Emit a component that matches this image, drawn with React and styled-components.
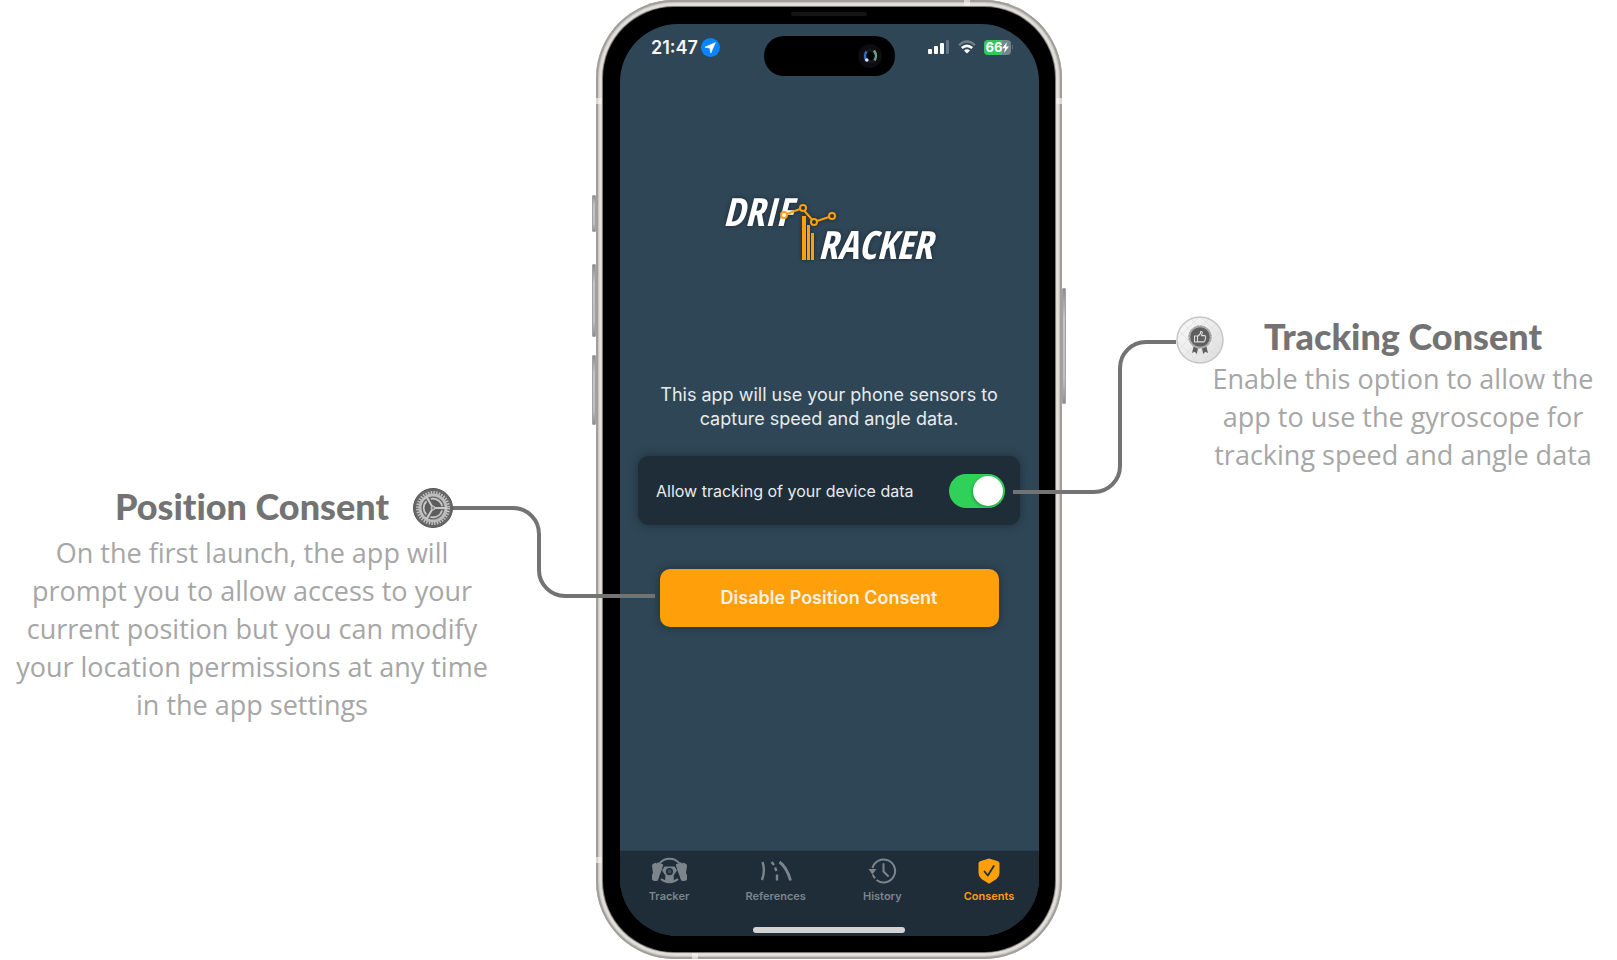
import React, { useState } from "react";
import styled, { createGlobalStyle } from "styled-components";

const GlobalStyle = createGlobalStyle`
  *, *::before, *::after { box-sizing: border-box; }
  body { margin: 0; background: #ffffff; }
  h2, p { margin: 0; font-weight: inherit; }
`;

const appFont = `Inter, Roboto, sans-serif`;
const amber = "#ff9f0a";

const Page = styled.main`
  display: grid;
  grid-template-columns: minmax(0, 596fr) 466px minmax(0, 555fr);
  align-items: start;
`;

/* ---------- callouts ---------- */

const Callout = styled.section`
  position: relative;
  z-index: 2;
  justify-self: ${(p) => (p.$side === "left" ? "end" : "start")};
  width: ${(p) => (p.$side === "left" ? "480px" : "390px")};
  margin: ${(p) => (p.$side === "left" ? "484px 104px 0 0" : "314px 0 0 146px")};
  text-align: center;
`;

const CalloutHeader = styled.div`
  display: grid;
  grid-template-columns: 1fr auto 1fr;
  align-items: start;
  height: ${(p) => (p.$side === "left" ? "50px" : "46px")};
`;

const CalloutTitle = styled.h2`
  grid-column: 2;
  grid-row: 1;
  font: 900 36px/44px Lato, sans-serif;
  font-variant-ligatures: none;
  color: #737373;
  white-space: nowrap;
`;

const CalloutText = styled.p`
  font: 400 27px/38px "Open Sans", "Noto Sans", sans-serif;
  color: #a6a6a6;
`;

const Marker = styled.div`
  position: relative;
  grid-row: 1;
  grid-column: ${(p) => (p.$side === "left" ? 3 : 1)};
  justify-self: start;
  width: ${(p) => (p.$side === "left" ? "40px" : "48px")};
  height: ${(p) => (p.$side === "left" ? "40px" : "48px")};
  margin: ${(p) => (p.$side === "left" ? "4px 0 0 24px" : "2px 0 0 -32px")};
  > svg { display: block; }
`;

const Connector = styled.svg`
  position: absolute;
  top: ${(p) => (p.$side === "left" ? "18px" : "24px")};
  ${(p) => (p.$side === "left" ? "left: 100%;" : "right: 100%;")}
  fill: none;
  stroke: #737373;
  stroke-width: 4;
`;

/* ---------- phone ---------- */

const Phone = styled.div`
  position: relative;
  display: flex;
  min-height: 959px;
  padding: 7px;
  border-radius: 78px;
  background: #e6e5e0;
  box-shadow: inset 0 0 0 2px #a09f9c, inset 0 0 2px 3px #bdbcb8;
`;

const SideButton = styled.span`
  position: absolute;
  ${(p) => (p.$side === "left" ? "right: 100%;" : "left: 100%;")}
  top: ${(p) => p.$top}px;
  width: 4px;
  height: ${(p) => p.$length}px;
  border-radius: 1px;
  border: 1px solid #a3a3a5;
  background: linear-gradient(#8d8d8d, #c4c4c4 25%, #bfbfbf 80%, #8d8d8d);
`;

const AntennaBand = styled.span`
  position: absolute;
  background: rgba(250, 250, 248, 0.6);
  ${(p) => (p.$edge === "left" || p.$edge === "right" ? "width: 7px; height: 6px;" : "width: 6px; height: 7px;")}
  ${(p) => `${p.$edge}: 0;`}
  ${(p) => (p.$edge === "left" || p.$edge === "right" ? `top: ${p.$at}px;` : `left: ${p.$at}px;`)}
`;

const Bezel = styled.div`
  position: relative;
  flex: 1;
  display: flex;
  padding: 17px 16px 16px 17px;
  border-radius: 71px;
  background: #000;
  box-shadow: 0 0 1px 1px #6f6e6c;
`;

const Speaker = styled.span`
  position: absolute;
  top: 5px;
  left: 50%;
  width: 76px;
  height: 4px;
  margin-left: -38px;
  border-radius: 2px;
  background: #141414;
`;

const Screen = styled.div`
  flex: 1;
  display: flex;
  flex-direction: column;
  overflow: hidden;
  border-radius: 58px;
  background: #2f4656;
  color: #e8ebed;
  font-family: ${appFont};
`;

const StatusBar = styled.div`
  display: grid;
  grid-template-columns: 1fr 131px 1fr;
  padding-top: 12px;
`;

const StatusLeft = styled.div`
  display: flex;
  align-items: center;
  gap: 3px;
  height: 22px;
  padding-left: 31px;
  font-size: 18px;
  font-weight: 600;
  color: #f4f6f7;
`;

const StatusRight = styled.div`
  display: flex;
  align-items: center;
  justify-content: flex-end;
  gap: 8px;
  height: 22px;
  padding-right: 26px;
`;

const Island = styled.div`
  display: flex;
  align-items: center;
  justify-content: flex-end;
  height: 40px;
  padding-right: 12px;
  border-radius: 20px;
  background: #000;
`;

const Battery = styled.div`
  display: flex;
  align-items: center;
  justify-content: center;
  width: 27px;
  height: 15px;
  border-radius: 4px;
  background: linear-gradient(90deg, #34c759 68%, #76848e 68%);
  color: #fff;
  font-size: 13px;
  font-weight: 700;
  line-height: 15px;
`;

const BatteryGroup = styled.div`
  display: flex;
  align-items: center;
  gap: 1px;
`;

const BatteryTip = styled.span`
  width: 1px;
  height: 4px;
  background: #5f717d;
`;

const Content = styled.div`
  flex: 1;
  display: flex;
  flex-direction: column;
  align-items: center;
  padding: 112px 19px 24px 18px;
`;

const Logo = styled.svg`
  display: block;
  width: 220px;
  height: 74px;
  overflow: visible;
  filter: drop-shadow(0 0 2px rgba(15, 25, 33, 0.7));
`;

const LogoText = styled.text`
  font: italic 700 39px "Open Sans Condensed", "Roboto Condensed", "Open Sans", sans-serif;
  fill: #ffffff;
`;

const Intro = styled.p`
  max-width: 360px;
  margin-top: 121px;
  font-size: 18px;
  line-height: 24px;
  text-align: center;
`;

const ConsentRow = styled.label`
  align-self: stretch;
  display: flex;
  align-items: center;
  justify-content: space-between;
  height: 69px;
  margin-top: 25px;
  padding: 0 15px 0 18px;
  border-radius: 11px;
  background: #1f2d38;
  box-shadow: 0 0 8px rgba(20, 32, 41, 0.6);
  font-size: 16px;
`;

const Switch = styled.input`
  appearance: none;
  position: relative;
  width: 56px;
  height: 34px;
  margin: 0;
  border-radius: 17px;
  background: #55636d;
  cursor: pointer;

  &::after {
    content: "";
    position: absolute;
    top: 2px;
    left: 2px;
    width: 30px;
    height: 30px;
    border-radius: 50%;
    background: #fff;
    box-shadow: -1px 1px 3px rgba(0, 0, 0, 0.25);
  }
  &:checked { background: #30d158; }
  &:checked::after { left: 24px; }
`;

const PrimaryButton = styled.button`
  width: 339px;
  height: 58px;
  margin-top: 44px;
  border: 0;
  border-radius: 10px;
  background: ${amber};
  box-shadow: 0 0 8px rgba(20, 32, 41, 0.6);
  color: #f6f1e8;
  font: 600 18px/24px ${appFont};
  cursor: pointer;
`;

const TabBar = styled.nav`
  display: flex;
  justify-content: space-between;
  height: 85px;
  padding: 6px 16px 0 15px;
  background: #1f2d38;
  box-shadow: 0 -1px 0 #2a3e4b;
`;

const TabButton = styled.button`
  display: flex;
  flex-direction: column;
  align-items: center;
  gap: 3px;
  width: 68px;
  height: 44px;
  padding: 0;
  border: 0;
  background: none;
  color: ${(p) => (p.$active ? amber : "#7c858c")};
  font: 600 11px/16px ${appFont};
  cursor: pointer;
  svg { display: block; flex: none; }
`;

const HomeIndicator = styled.span`
  position: absolute;
  bottom: 19px;
  left: 50%;
  width: 152px;
  height: 6px;
  margin-left: -76px;
  border-radius: 3px;
  background: #d3d3d3;
`;

/* ---------- icons ---------- */

const LocationIcon = () => (
  <svg width="19" height="19" viewBox="0 0 19 19" aria-hidden="true">
    <circle cx="9.5" cy="9.5" r="9.5" fill="#0a84ff" />
    <path d="M14.4 4.6 3.9 9.2 8.9 10.1 9.8 15.1Z" fill="#fff" stroke="#fff" strokeWidth="0.6" strokeLinejoin="round" />
  </svg>
);

const CameraIcon = () => (
  <svg width="26" height="26" viewBox="0 0 26 26" aria-hidden="true">
    <circle cx="13" cy="13" r="12" fill="#0d0d0f" />
    <circle cx="13" cy="13" r="7.5" fill="#14181d" />
    <path d="M9.500 8.500Q7 12.500 9 17" stroke="#2f6fc4" strokeWidth="2.400" fill="none" />
    <path d="M17 7.500Q20.500 12.500 17.500 17.500" stroke="#6d9c85" strokeWidth="2.600" fill="none" />
    <circle cx="13.500" cy="13" r="4" fill="#030405" />
    <circle cx="9.800" cy="17" r="1.800" fill="#dfe2fa" />
  </svg>
);

const SignalIcon = () => (
  <svg width="22" height="14" viewBox="0 0 22 14" fill="#fff" aria-hidden="true">
    <rect x="0" y="9" width="4" height="5" rx="1" />
    <rect x="6" y="6" width="4" height="8" rx="1" />
    <rect x="12" y="3" width="4" height="11" rx="1" />
    <rect x="18" y="0" width="3" height="14" rx="1" opacity="0.25" />
  </svg>
);

const WifiIcon = () => (
  <svg width="18" height="14" viewBox="0 0 18 14" fill="none" stroke="#fff" aria-hidden="true">
    <path d="M1 5.200Q9-2.200 17 5.200" strokeWidth="2.200" opacity="0.3" />
    <path d="M3.800 8Q9 3.600 14.200 8" strokeWidth="2.600" />
    <path d="M9 13.400 6 10.500Q9 8 12 10.500Z" fill="#fff" stroke="none" />
  </svg>
);

const BoltIcon = () => (
  <svg width="7" height="11" viewBox="0 0 7 11" fill="#fff" aria-hidden="true">
    <path d="M5 0 0 6.200H3L2 11 7 4.600H4Z" />
  </svg>
);

const GearIcon = () => (
  <svg width="40" height="40" viewBox="-20 -20 40 40" fill="none" aria-hidden="true">
    <circle r="19.500" fill="#666" stroke="#585858" />
    <circle r="15.500" stroke="#c4c4c4" strokeWidth="3" strokeDasharray="1.400 1.305" />
    <circle r="13" stroke="#bdbdbd" strokeWidth="3" />
    <circle r="9.500" fill="#5d5d5d" stroke="#777" strokeWidth="1.500" />
    <circle r="9.300" stroke="#c9c9c9" strokeWidth="1.700" strokeDasharray="14.500 5" strokeDashoffset="-2.500" />
    <g stroke="#c9c9c9" strokeWidth="2">
      <path d="M0 0H14M0 0-6.500-11.300M0 0-6.500 11.300" />
    </g>
    <circle r="2" fill="#8a8a8a" stroke="#c9c9c9" />
  </svg>
);

const MedalIcon = () => (
  <svg width="48" height="48" viewBox="0 0 48 48" aria-hidden="true">
    <defs>
      <linearGradient id="medalFace" x1="0" y1="0" x2="1" y2="1">
        <stop offset="0" stopColor="#fbfbfb" />
        <stop offset="1" stopColor="#dcdcdc" />
      </linearGradient>
      <pattern id="medalMesh" width="12" height="12" patternUnits="userSpaceOnUse">
        <path d="M0 0 12 12M12 0 0 12" stroke="#dedede" strokeWidth="0.7" />
      </pattern>
    </defs>
    <circle cx="24" cy="24" r="23" fill="url(#medalFace)" />
    <circle cx="24" cy="24" r="23" fill="url(#medalMesh)" stroke="#c6c6c6" strokeWidth="1.500" />
    <path d="M18 29 16 37 18.800 35.800 20.800 38 22.300 31ZM30 29 32 37 29.200 35.800 27.200 38 25.700 31Z" fill="#5e5e5e" />
    <circle cx="24" cy="21" r="11.500" fill="#b0b0b0" />
    <circle cx="24" cy="21" r="11" fill="none" stroke="#999" strokeWidth="1" strokeDasharray="2 1.456" />
    <circle cx="24" cy="21" r="9.800" fill="#5f5f5f" />
    <path d="M18.500 20H21.500V26H18.500ZM21.500 20.500 24.500 17.500V15.800Q25.800 15 26.300 16.600L25.500 19.600H29Q30.200 20.600 29.300 21.800 30 23 29 23.700 29.200 25 28 25.900H21.500" fill="none" stroke="#dedede" strokeWidth="1.100" strokeLinejoin="round" />
  </svg>
);

const WheelIcon = () => (
  <svg width="37" height="28" viewBox="0 0 37 28" fill="currentColor" aria-hidden="true">
    <path d="M8.500 6.500A12.500 12 0 0 1 28.500 6.500M10 22A12.500 12 0 0 0 27 22" fill="none" stroke="currentColor" strokeWidth="2" />
    <path d="M3 6.500Q4.200 5 5.500 6.500L7 5.500Q8.500 5 9 6.500L11.500 7Q12.800 7.500 11.800 9.500L9.800 15.500Q8.500 18 7.800 21L6.800 23.500Q3 25 1 22.500L1 18Q2.600 16 1.600 13L1 9Q1 6.500 3 6.500Z" />
    <path d="M34 6.500Q32.800 5 31.500 6.500L30 5.500Q28.500 5 28 6.500L25.500 7Q24.200 7.500 25.200 9.500L27.200 15.500Q28.500 18 29.200 21L30.200 23.500Q34 25 36 22.500L36 18Q34.400 16 35.400 13L36 9Q36 6.500 34 6.500Z" />
    <path fillRule="evenodd" d="M13.500 9.500H23.500L26 13.500 22.600 18.500 22.900 23.500Q18.500 25.500 14.100 23.500L14.400 18.500 11 13.500ZM18.500 11A3.600 3.600 0 1 0 18.500 18.200 3.600 3.600 0 1 0 18.500 11Z" />
    <circle cx="18.500" cy="14.600" r="2" opacity="0.35" />
  </svg>
);

const RoadIcon = () => (
  <svg width="34" height="28" viewBox="0 0 34 28" fill="none" stroke="currentColor" strokeWidth="2.400" aria-hidden="true">
    <path d="M3.500 5Q6.500 13.500 3 23" />
    <path d="M20.500 5Q28 10.500 31.500 23.500" strokeWidth="2.800" />
    <path d="M12.500 5 15 8M16 10.500 17.500 14M18 17.500V23.500" />
  </svg>
);

const HistoryIcon = () => (
  <svg width="29" height="28" viewBox="0 0 29 28" fill="none" stroke="currentColor" strokeWidth="2" aria-hidden="true">
    <path d="M4.500 11A11.500 11.500 0 1 1 8.500 23" />
    <path d="M4.800 17.500Q5.500 19.500 7 21.300" />
    <path d="M0.500 12H8.500L4.300 17.500Z" fill="currentColor" stroke="none" />
    <path d="M15.500 7V14.500L20 19" strokeLinecap="round" />
  </svg>
);

const ShieldIcon = () => (
  <svg width="24" height="28" viewBox="0 0 24 28" aria-hidden="true">
    <path d="M12 1.500 21 4.300Q22.500 5 22.500 6.500V16Q22.500 19.500 19.500 22L12 26.700 4.500 22Q1.500 19.500 1.500 16V6.500Q1.500 5 3 4.300Z" fill="currentColor" />
    <path d="M7.500 14.500 10.800 18.500 16.800 9" fill="none" stroke="#1f2d38" strokeWidth="1.800" strokeLinecap="round" strokeLinejoin="round" />
  </svg>
);

const tabs = [
  { label: "Tracker", Icon: WheelIcon },
  { label: "References", Icon: RoadIcon },
  { label: "History", Icon: HistoryIcon },
  { label: "Consents", Icon: ShieldIcon },
];

const chartPoints = [[65, 27], [84, 20], [95, 34], [113, 28]];

const DriftLogo = () => (
  <Logo viewBox="0 0 220 74" role="img" aria-label="DrifTracker">
    <LogoText x="4" y="38">DRIF</LogoText>
    <LogoText x="99" y="71">RACKER</LogoText>
    <g fill={amber}>
      <rect x="83" y="28" width="4" height="44" />
      <rect x="88" y="37" width="3" height="35" />
      <rect x="92" y="45" width="3" height="27" />
    </g>
    <g fill="none" stroke={amber} strokeWidth="2">
      <path d="M68 26 81 21M85.500 23 93 31.500M98 33 110 29" />
      {chartPoints.map(([x, y]) => (
        <circle key={x} cx={x} cy={y} r="3" />
      ))}
    </g>
  </Logo>
);

export default function App() {
  const [tracking, setTracking] = useState(true);
  const [active, setActive] = useState("Consents");

  return (
    <>
      <GlobalStyle />
      <Page>
        <Callout $side="left">
          <CalloutHeader $side="left">
            <CalloutTitle>Position Consent</CalloutTitle>
            <Marker $side="left">
              <GearIcon />
              <Connector $side="left" width="202" height="92" viewBox="0 0 202 92">
                <path d="M0 2H60A26 26 0 0 1 86 28V64A26 26 0 0 0 112 90H202" />
              </Connector>
            </Marker>
          </CalloutHeader>
          <CalloutText>
            On the first launch, the app will prompt you to allow access to your current position but you can
            modify your location permissions at any time in the app settings
          </CalloutText>
        </Callout>

        <Phone>
          <SideButton $side="left" $top={195} $length={37} />
          <SideButton $side="left" $top={264} $length={73} />
          <SideButton $side="left" $top={355} $length={70} />
          <SideButton $side="right" $top={288} $length={116} />
          <AntennaBand $edge="left" $at={98} />
          <AntennaBand $edge="right" $at={98} />
          <AntennaBand $edge="left" $at={857} />
          <AntennaBand $edge="top" $at={368} />
          <AntennaBand $edge="bottom" $at={96} />
          <Bezel>
            <Speaker />
            <Screen>
              <StatusBar>
                <StatusLeft>
                  <span>21:47</span>
                  <LocationIcon />
                </StatusLeft>
                <Island>
                  <CameraIcon />
                </Island>
                <StatusRight>
                  <SignalIcon />
                  <WifiIcon />
                  <BatteryGroup>
                    <Battery>
                      66
                      <BoltIcon />
                    </Battery>
                    <BatteryTip />
                  </BatteryGroup>
                </StatusRight>
              </StatusBar>

              <Content>
                <DriftLogo />
                <Intro>This app will use your phone sensors to capture speed and angle data.</Intro>
                <ConsentRow>
                  Allow tracking of your device data
                  <Switch
                    type="checkbox"
                    role="switch"
                    checked={tracking}
                    onChange={(e) => setTracking(e.target.checked)}
                  />
                </ConsentRow>
                <PrimaryButton type="button">Disable Position Consent</PrimaryButton>
              </Content>

              <TabBar>
                {tabs.map(({ label, Icon }) => (
                  <TabButton key={label} type="button" $active={label === active} onClick={() => setActive(label)}>
                    <Icon />
                    {label}
                  </TabButton>
                ))}
              </TabBar>
            </Screen>
            <HomeIndicator />
          </Bezel>
        </Phone>

        <Callout $side="right">
          <CalloutHeader $side="right">
            <Marker $side="right">
              <MedalIcon />
              <Connector $side="right" width="163" height="154" viewBox="0 0 163 154">
                <path d="M0 152H81A26 26 0 0 0 107 126V28A26 26 0 0 1 133 2H163" />
              </Connector>
            </Marker>
            <CalloutTitle>Tracking Consent</CalloutTitle>
          </CalloutHeader>
          <CalloutText>Enable this option to allow the app to use the gyroscope for tracking speed and angle data</CalloutText>
        </Callout>
      </Page>
    </>
  );
}
